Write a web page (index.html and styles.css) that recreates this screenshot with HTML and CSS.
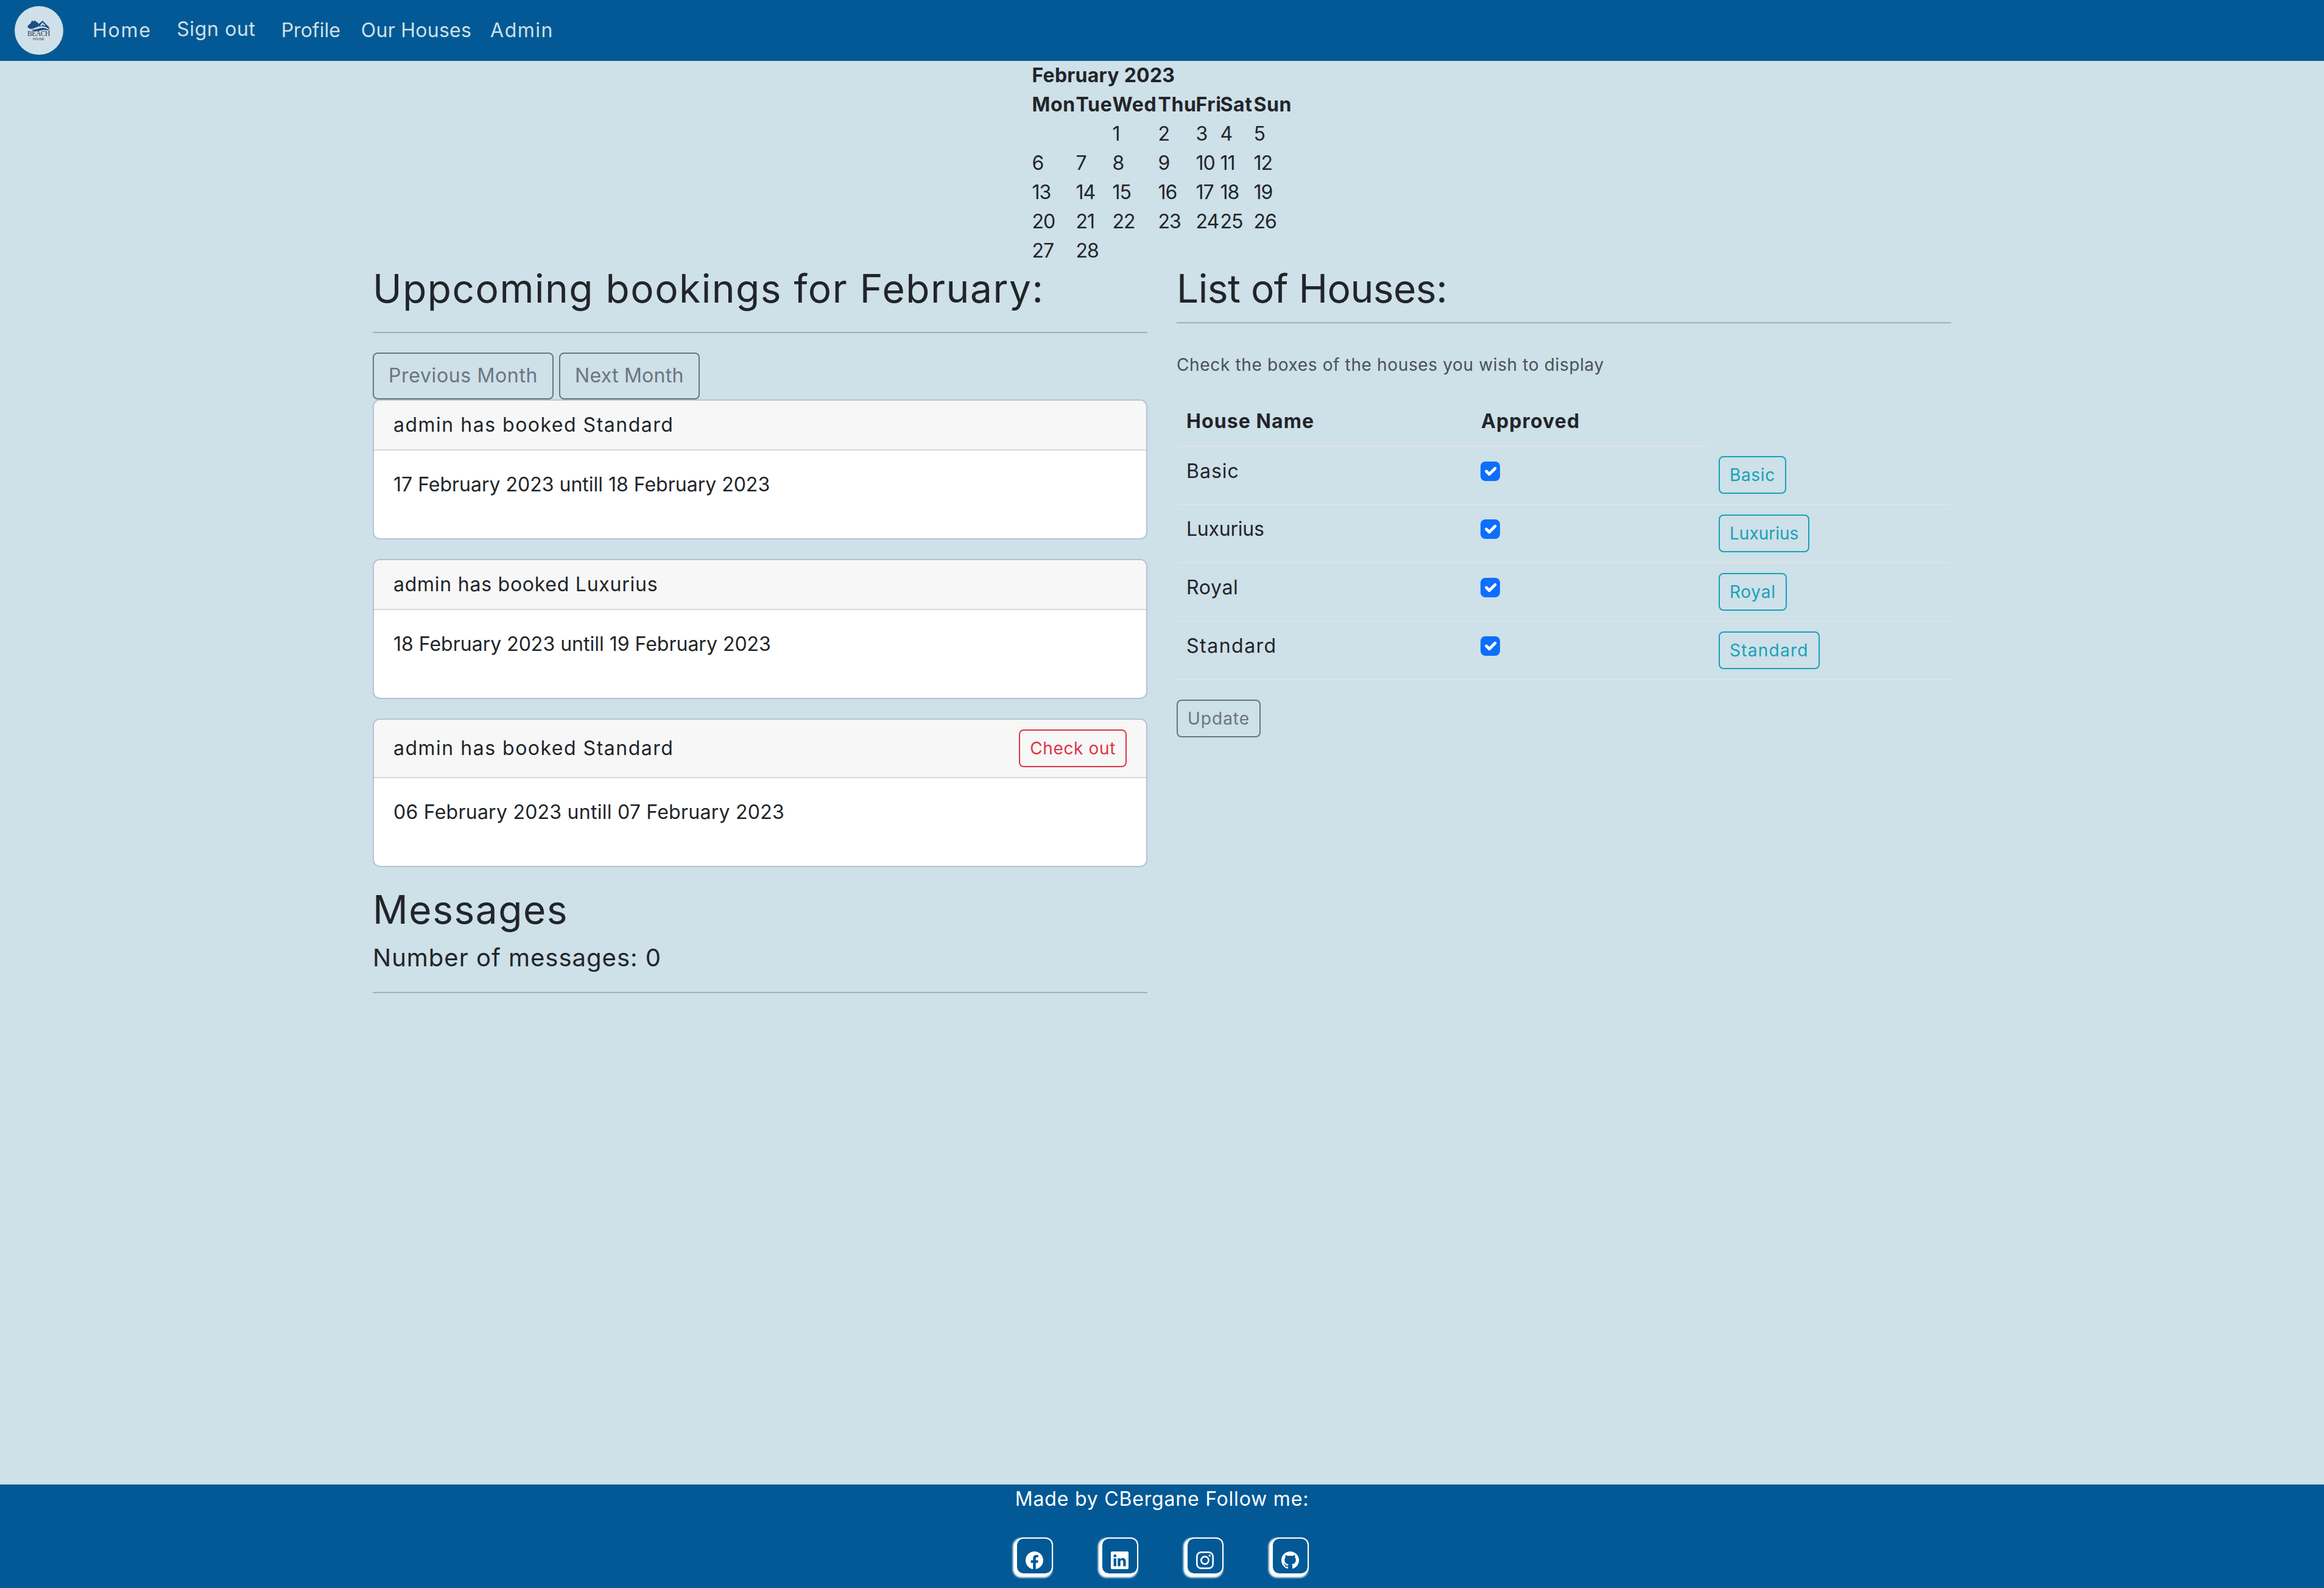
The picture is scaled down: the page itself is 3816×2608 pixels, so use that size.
FILE: index.html
```html
<!DOCTYPE html>
<html lang="en">
<head>
  <meta charset="UTF-8">
  <meta name="viewport" content="width=device-width, initial-scale=1.0">
  <title>Beach House</title>
  <link rel="stylesheet" href="styles.css">
</head>
<body>
  <nav class="navbar">
    <a class="brand" href="#">
      <svg class="logo" viewBox="0 0 80 80">
        <circle cx="40" cy="40" r="40" fill="#cfe0e8"/>
        <path d="M21 34C23 30 26 29 27 27L28 24L30 24L30.5 25.5L33 23.5L40 29L46 24L56 34L58 39C54 35 49 33 44 33C38 33 34 36 30 37C26 38 23 37 21 34z" fill="#1b4f80"/>
        <path d="M42 31L46 27L51 32L48 32L46 30L44 33z" fill="#cfe0e8"/>
        <path d="M27 38C33 40 38 37 43 36C49 35 54 37 58 41C53 39 48 39 43 40C37 42 31 42 27 38z" fill="#1b4f80"/>
        <text class="logo-title" x="21" y="49" textLength="38">BEACH</text>
        <text class="logo-sub" x="30" y="55.5" textLength="19">HOUSE</text>
      </svg>
    </a>
    <ul class="nav-list">
      <li><a class="nav-link home t175" href="#">Home</a></li>
      <li><a class="nav-link signout" href="#">Sign out</a></li>
      <li><a class="nav-link t0" href="#">Profile</a></li>
      <li><a class="nav-link houses-link t25" href="#">Our Houses</a></li>
      <li><a class="nav-link t150" href="#">Admin</a></li>
    </ul>
  </nav>

  <main class="content">
    <table class="calendar">
      <colgroup>
        <col class="day-a"><col class="day-b"><col class="day-c"><col class="day-d"><col class="day-e"><col class="day-f"><col class="day-g">
      </colgroup>
      <thead>
        <tr><th class="t25" colspan="7">February 2023</th></tr>
        <tr><th>Mon</th><th>Tue</th><th>Wed</th><th>Thu</th><th>Fri</th><th>Sat</th><th>Sun</th></tr>
      </thead>
      <tbody>
        <tr><td></td><td></td><td>1</td><td>2</td><td>3</td><td>4</td><td>5</td></tr>
        <tr><td>6</td><td>7</td><td>8</td><td>9</td><td>10</td><td>11</td><td>12</td></tr>
        <tr><td>13</td><td>14</td><td>15</td><td>16</td><td>17</td><td>18</td><td>19</td></tr>
        <tr><td>20</td><td>21</td><td>22</td><td>23</td><td>24</td><td>25</td><td>26</td></tr>
        <tr><td>27</td><td>28</td><td></td><td></td><td></td><td></td><td></td></tr>
      </tbody>
    </table>

    <div class="columns">
      <section class="column">
        <h2 class="t150">Uppcoming bookings for February:</h2>
        <hr class="rule rule-bookings">
        <div class="month-buttons">
          <button class="btn btn-secondary">Previous Month</button>
          <button class="btn btn-secondary t25">Next Month</button>
        </div>

        <div class="card">
          <div class="card-header t150">admin has booked Standard</div>
          <div class="card-body"><p class="t0">17 February 2023 untill 18 February 2023</p></div>
        </div>
        <div class="card">
          <div class="card-header t75">admin has booked Luxurius</div>
          <div class="card-body"><p class="t0">18 February 2023 untill 19 February 2023</p></div>
        </div>
        <div class="card">
          <div class="card-header">
            <span class="t150">admin has booked Standard</span>
            <button class="btn btn-sm btn-danger">Check out</button>
          </div>
          <div class="card-body"><p class="t25">06 February 2023 untill 07 February 2023</p></div>
        </div>

        <h2 class="t150">Messages</h2>
        <h5 class="t100">Number of messages: 0</h5>
        <hr class="rule rule-messages">
      </section>

      <section class="column">
        <h2 class="tn50">List of Houses:</h2>
        <hr class="rule">
        <p class="hint">Check the boxes of the houses you wish to display</p>
        <table class="houses">
          <colgroup><col class="house-name"><col class="house-check"><col class="house-link"></colgroup>
          <thead>
            <tr><th>House Name</th><th>Approved</th><th class="no-line"></th></tr>
          </thead>
          <tbody>
            <tr>
              <td class="t100">Basic</td>
              <td><input class="check" type="checkbox" checked></td>
              <td><a class="btn btn-sm btn-info" href="#">Basic</a></td>
            </tr>
            <tr>
              <td class="tn25">Luxurius</td>
              <td><input class="check" type="checkbox" checked></td>
              <td><a class="btn btn-sm btn-info t0" href="#">Luxurius</a></td>
            </tr>
            <tr>
              <td>Royal</td>
              <td><input class="check" type="checkbox" checked></td>
              <td><a class="btn btn-sm btn-info t75" href="#">Royal</a></td>
            </tr>
            <tr>
              <td class="t150">Standard</td>
              <td><input class="check" type="checkbox" checked></td>
              <td><a class="btn btn-sm btn-info t125" href="#">Standard</a></td>
            </tr>
          </tbody>
        </table>
        <button class="btn btn-sm btn-secondary t100">Update</button>
      </section>
    </div>
  </main>

  <footer class="footer">
    <p class="credit">Made by CBergane Follow me:</p>
    <div class="socials">
      <a class="social" href="#">
        <svg viewBox="0 0 16 16" fill="currentColor"><path d="M16 8.049c0-4.446-3.582-8.05-8-8.05C3.58 0-.002 3.603-.002 8.05c0 4.017 2.926 7.347 6.75 7.951v-5.625h-2.03V8.05H6.75V6.275c0-2.017 1.195-3.131 3.022-3.131.876 0 1.791.157 1.791.157v1.98h-1.009c-.993 0-1.303.621-1.303 1.258v1.51h2.218l-.354 2.326H9.25V16c3.824-.604 6.75-3.934 6.75-7.951z"/></svg>
      </a>
      <a class="social" href="#">
        <svg viewBox="0 0 16 16" fill="currentColor"><path d="M0 1.146C0 .513.526 0 1.175 0h13.65C15.474 0 16 .513 16 1.146v13.708c0 .633-.526 1.146-1.175 1.146H1.175C.526 16 0 15.487 0 14.854V1.146zm4.943 12.248V6.169H2.542v7.225h2.401zm-1.2-8.212c.837 0 1.358-.554 1.358-1.248-.015-.709-.52-1.248-1.342-1.248-.822 0-1.359.54-1.359 1.248 0 .694.521 1.248 1.327 1.248h.016zm4.908 8.212V9.359c0-.216.016-.432.08-.586.173-.431.568-.878 1.232-.878.869 0 1.216.662 1.216 1.634v3.865h2.401V9.25c0-2.22-1.184-3.252-2.764-3.252-1.274 0-1.845.7-2.165 1.193v.025h-.016a5.54 5.54 0 0 1 .016-.025V6.169h-2.4c.03.678 0 7.225 0 7.225h2.4z"/></svg>
      </a>
      <a class="social" href="#">
        <svg viewBox="0 0 16 16" fill="currentColor"><path d="M8 0C5.829 0 5.556.01 4.703.048 3.85.088 3.269.222 2.76.42a3.917 3.917 0 0 0-1.417.923A3.927 3.927 0 0 0 .42 2.76C.222 3.268.087 3.85.048 4.7.01 5.555 0 5.827 0 8.001c0 2.172.01 2.444.048 3.297.04.852.174 1.433.372 1.942.205.526.478.972.923 1.417.444.445.89.719 1.416.923.51.198 1.09.333 1.942.372C5.555 15.99 5.827 16 8 16s2.444-.01 3.298-.048c.851-.04 1.434-.174 1.943-.372a3.916 3.916 0 0 0 1.416-.923c.445-.445.718-.891.923-1.417.197-.509.332-1.09.372-1.942C15.99 10.445 16 10.173 16 8s-.01-2.445-.048-3.299c-.04-.851-.175-1.433-.372-1.941a3.926 3.926 0 0 0-.923-1.417A3.911 3.911 0 0 0 13.24.42c-.51-.198-1.092-.333-1.943-.372C10.443.01 10.172 0 7.998 0h.003zm-.717 1.442h.718c2.136 0 2.389.007 3.232.046.78.035 1.204.166 1.486.275.373.145.64.319.92.599.28.28.453.546.598.92.11.281.24.705.275 1.485.039.843.047 1.096.047 3.231s-.008 2.389-.047 3.232c-.035.78-.166 1.203-.275 1.485a2.47 2.47 0 0 1-.599.919c-.28.28-.546.453-.92.598-.28.11-.704.24-1.485.276-.843.038-1.096.047-3.232.047s-2.39-.009-3.233-.047c-.78-.036-1.203-.166-1.485-.276a2.478 2.478 0 0 1-.92-.598 2.48 2.48 0 0 1-.6-.92c-.109-.281-.24-.705-.275-1.485-.038-.843-.046-1.096-.046-3.233 0-2.136.008-2.388.046-3.231.036-.78.166-1.204.276-1.486.145-.373.319-.64.599-.92.28-.28.546-.453.92-.598.282-.11.705-.24 1.485-.276.738-.034 1.024-.044 2.515-.045v.002zm4.988 1.328a.96.96 0 1 0 0 1.92.96.96 0 0 0 0-1.92zm-4.27 1.122a4.109 4.109 0 1 0 0 8.217 4.109 4.109 0 0 0 0-8.217zm0 1.441a2.667 2.667 0 1 1 0 5.334 2.667 2.667 0 0 1 0-5.334z"/></svg>
      </a>
      <a class="social" href="#">
        <svg viewBox="0 0 16 16" fill="currentColor"><path d="M8 0C3.58 0 0 3.58 0 8c0 3.54 2.29 6.53 5.47 7.59.4.07.55-.17.55-.38 0-.19-.01-.82-.01-1.49-2.01.37-2.53-.49-2.69-.94-.09-.23-.48-.94-.82-1.13-.28-.15-.68-.52-.01-.53.63-.01 1.08.58 1.23.82.72 1.21 1.87.87 2.33.66.07-.52.28-.87.51-1.07-1.78-.2-3.64-.89-3.64-3.95 0-.87.31-1.59.82-2.15-.08-.2-.36-1.02.08-2.12 0 0 .67-.21 2.2.82.64-.18 1.32-.27 2-.27.68 0 1.36.09 2 .27 1.53-1.04 2.2-.82 2.2-.82.44 1.1.16 1.92.08 2.12.51.56.82 1.27.82 2.15 0 3.07-1.87 3.75-3.65 3.95.29.25.54.73.54 1.48 0 1.07-.01 1.93-.01 2.2 0 .21.15.46.55.38A8.012 8.012 0 0 0 16 8c0-4.42-3.58-8-8-8z"/></svg>
      </a>
    </div>
  </footer>
</body>
</html>
```

FILE: styles.css
```css
html {
  font-size: 32px;
}
body {
  margin: 0;
  height: 100vh;
  display: flex;
  flex-direction: column;
  background: #cee0e8;
  color: #212529;
  font-family: Inter, "Noto Sans", sans-serif;
  font-size: 1rem;
  line-height: 1.5;
  letter-spacing: 0.64px;
}
a {
  text-decoration: none;
}

/* navbar */
.navbar {
  height: 100px;
  flex: none;
  display: flex;
  align-items: center;
  padding-left: 24px;
  background: #025996;
}
.brand {
  display: flex;
  margin-right: 31px;
}
.logo {
  width: 80px;
  height: 80px;
}
.logo-title {
  font-family: "Liberation Serif", serif;
  font-size: 11.5px;
  fill: #26323e;
}
.logo-sub {
  font-family: "Liberation Sans", sans-serif;
  font-size: 5px;
  fill: #26323e;
}
.nav-list {
  display: flex;
  align-items: center;
  list-style: none;
  margin: 0;
  padding: 0;
}
.nav-link {
  display: block;
  padding: 0 17px;
  color: #cfe0e8;
}
.nav-link.home {
  padding-right: 20px;
}
.nav-link.signout {
  padding: 0 25px 0 21.5px;
  margin-bottom: 4px;
}
.nav-link.houses-link {
  padding-right: 14px;
}

/* calendar */
.calendar {
  border-collapse: collapse;
  table-layout: fixed;
  width: 427px;
  margin: 0 auto;
}
.calendar th, .calendar td {
  padding: 0;
  height: 48px;
  text-align: left;
  white-space: nowrap;
}
.calendar td {
  letter-spacing: -0.03em;
}
.day-a { width: 72px; }
.day-b { width: 60px; }
.day-c { width: 75px; }
.day-d { width: 62px; }
.day-e { width: 40px; }
.day-f { width: 55px; }
.day-g { width: 63px; }

/* columns */
.content {
  flex: 1;
  width: 2640px;
  margin: 0 auto;
}
.columns {
  display: grid;
  grid-template-columns: 1fr 1fr;
}
.column {
  padding: 0 24px;
}
h2 {
  margin: 0 0 16px;
  font-size: 2rem;
  font-weight: 400;
  line-height: 1.2;
}
h5 {
  margin: 0 0 16px;
  font-size: 1.25rem;
  font-weight: 400;
  line-height: 1.2;
}
.rule {
  margin: 0;
  border: 0;
  border-top: 2px solid #9fb0bb;
}
.rule-bookings {
  margin: 32px 0;
}
.rule-messages {
  margin-top: 32px;
}
.rule + .hint {
  margin-top: 47px;
}

/* buttons */
.btn {
  display: inline-block;
  padding: 12px 24px;
  background: transparent;
  border: 2px solid;
  border-radius: 8px;
  font-family: inherit;
  font-size: 1rem;
  letter-spacing: 0.64px;
  line-height: 1.5;
}
.btn-sm {
  padding: 8px 16px;
  font-size: 0.875rem;
}
.btn-secondary {
  color: #6c757d;
  border-color: #6c757d;
}
.btn-danger {
  color: #dc3545;
  border-color: #dc3545;
}
.btn-info {
  color: #17a2b8;
  border-color: #17a2b8;
}
.month-buttons {
  display: flex;
  gap: 9px;
  height: 77px;
}

/* booking cards */
.card {
  margin-bottom: 32px;
  background: #fff;
  border: 2px solid rgba(0, 0, 0, 0.125);
  border-radius: 12px;
  background-clip: padding-box;
}
.card-header {
  display: flex;
  justify-content: space-between;
  align-items: center;
  padding: 16px 32px;
  background: #f7f7f7;
  border-bottom: 2px solid rgba(0, 0, 0, 0.125);
  border-radius: 10px 10px 0 0;
}
.card-body {
  padding: 32px;
}
.card-body p {
  margin: 0 0 32px;
}

/* houses table */
.hint {
  margin: 0 0 32px;
  font-size: 0.875rem;
  color: #495057;
}
.houses {
  width: 100%;
  margin-bottom: 32px;
  border-collapse: collapse;
  table-layout: fixed;
}
.house-name { width: 484px; }
.house-check { width: 390px; }
.houses th, .houses td {
  padding: 16px;
  text-align: left;
  vertical-align: top;
  border-bottom: 2px solid #dee2e6;
}
.houses th {
  font-weight: 700;
  letter-spacing: 1.1px;
}
.houses th.no-line {
  border-bottom: 0;
}
.check {
  appearance: none;
  display: block;
  width: 32px;
  height: 32px;
  margin: 8px 0 0 -1px;
  border-radius: 8px;
  background-color: #0d6efd;
  background-image: url("data:image/svg+xml,%3csvg xmlns='http://www.w3.org/2000/svg' viewBox='0 0 20 20'%3e%3cpath fill='none' stroke='%23fff' stroke-linecap='round' stroke-linejoin='round' stroke-width='3' d='M6 10l3 3l6-6'/%3e%3c/svg%3e");
  background-size: 100% 100%;
}

/* footer */
.footer {
  height: 170px;
  flex: none;
  background: #025996;
  color: #fff;
  text-align: center;
}
.credit {
  margin: 0;
  letter-spacing: 0.8px;
}
.socials {
  display: flex;
  justify-content: center;
  gap: 83px;
  margin-top: 41px;
}
.social {
  display: flex;
  justify-content: center;
  align-items: flex-end;
  width: 57px;
  height: 57px;
  padding-bottom: 7px;
  box-sizing: border-box;
  border-radius: 10px;
  color: #fff;
  box-shadow: 0 0 0 2px #fff, -3px 3px 3px 4px #fff;
}
.social svg {
  width: 29px;
  height: 29px;
}

/* text widths, set to the lengths of the original lines */
.tn50 { letter-spacing: -0.5px; }
.tn25 { letter-spacing: -0.25px; }
.t0 { letter-spacing: 0; }
.t25 { letter-spacing: 0.25px; }
.t75 { letter-spacing: 0.75px; }
.t100 { letter-spacing: 1px; }
.t125 { letter-spacing: 1.25px; }
.t150 { letter-spacing: 1.5px; }
.t175 { letter-spacing: 1.75px; }
```
